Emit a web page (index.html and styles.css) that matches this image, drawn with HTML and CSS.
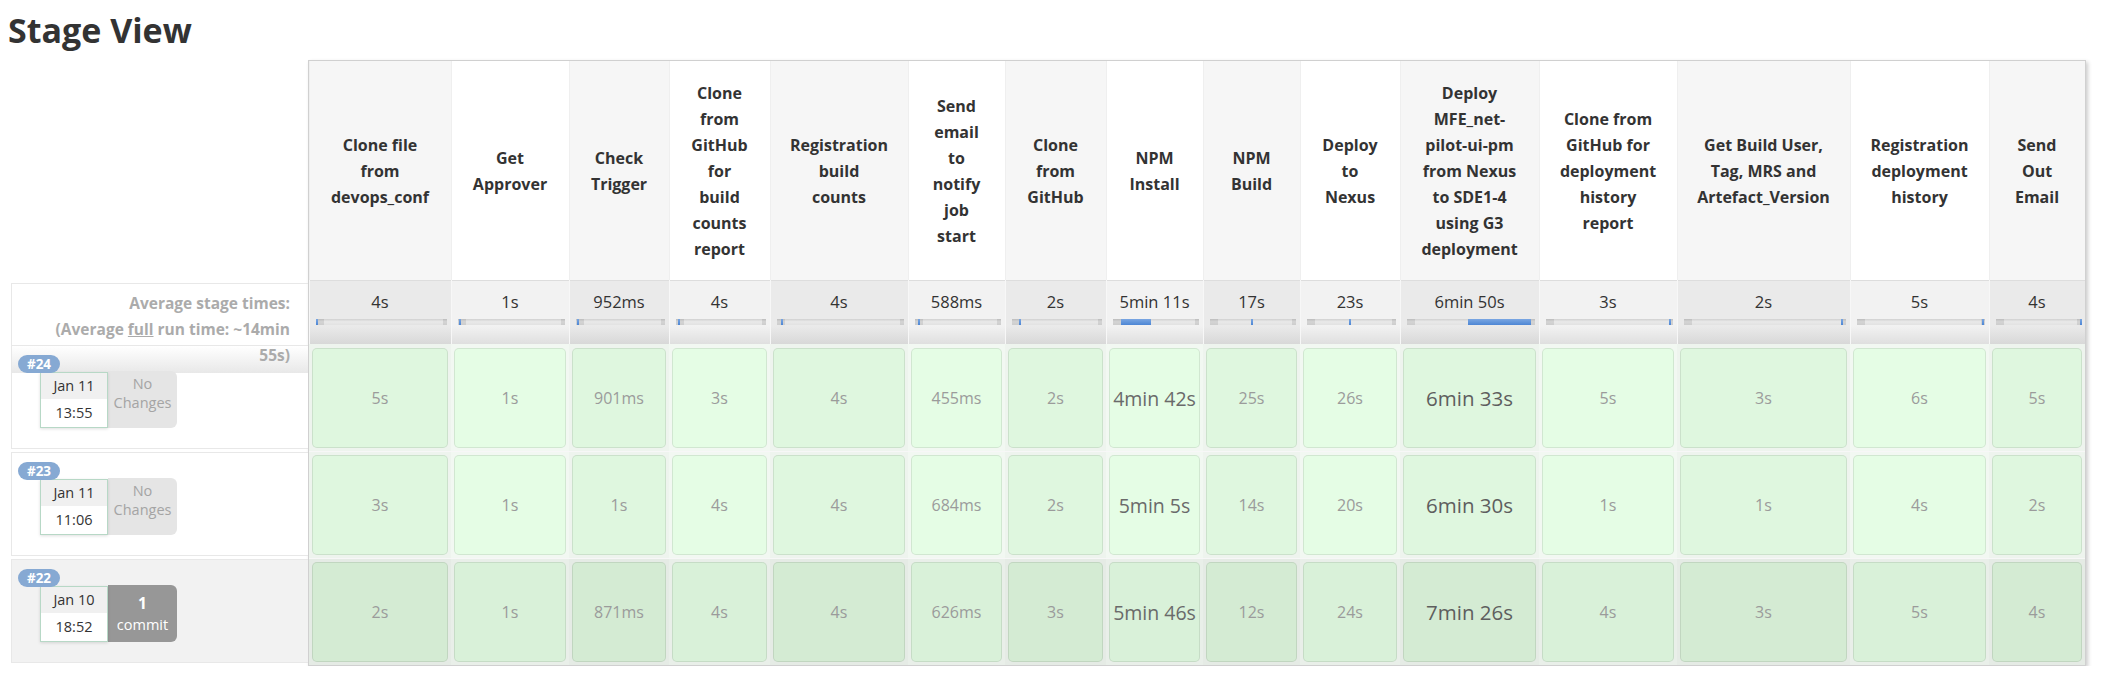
FILE: index.html
```html
<!DOCTYPE html>
<html>
<head>
<meta charset="utf-8">
<title>Stage View</title>
<link rel="stylesheet" href="styles.css">
</head>
<body>
<h1 class="title">Stage View</h1>
<div class="stage-view">
  <div class="runs">
    <div class="runs-head"></div>
    <div class="avg-label">Average stage times:<br>(Average <span class="full">full</span> run time: ~14min<br>55s)</div>
    <div class="run first">
      <span class="badge">#24</span>
      <div class="run-info">
        <div class="date"><div class="date-day">Jan 11</div><div class="date-time">13:55</div></div>
        <div class="changes">No<br>Changes</div>
      </div>
    </div>
    <div class="run">
      <span class="badge">#23</span>
      <div class="run-info">
        <div class="date"><div class="date-day">Jan 11</div><div class="date-time">11:06</div></div>
        <div class="changes">No<br>Changes</div>
      </div>
    </div>
    <div class="run shaded">
      <span class="badge">#22</span>
      <div class="run-info">
        <div class="date"><div class="date-day">Jan 10</div><div class="date-time">18:52</div></div>
        <div class="changes commit"><b>1</b><span>commit</span></div>
      </div>
    </div>
  </div>

  <table class="stages">
    <colgroup>
      <col style="width:142px"><col style="width:118px"><col style="width:100px"><col style="width:101px"><col style="width:138px">
      <col style="width:97px"><col style="width:101px"><col style="width:97px"><col style="width:97px"><col style="width:100px">
      <col style="width:139px"><col style="width:138px"><col style="width:173px"><col style="width:139px"><col style="width:96px">
    </colgroup>
    <thead>
      <tr class="names">
        <th><div class="name">Clone file<br>from<br>devops_conf</div></th>
        <th><div class="name">Get<br>Approver</div></th>
        <th><div class="name">Check<br>Trigger</div></th>
        <th><div class="name">Clone<br>from<br>GitHub<br>for<br>build<br>counts<br>report</div></th>
        <th><div class="name">Registration<br>build<br>counts</div></th>
        <th><div class="name">Send<br>email<br>to<br>notify<br>job<br>start</div></th>
        <th><div class="name">Clone<br>from<br>GitHub</div></th>
        <th><div class="name">NPM<br>Install</div></th>
        <th><div class="name">NPM<br>Build</div></th>
        <th><div class="name">Deploy<br>to<br>Nexus</div></th>
        <th><div class="name">Deploy<br>MFE_net-<br>pilot-ui-pm<br>from Nexus<br>to SDE1-4<br>using G3<br>deployment</div></th>
        <th><div class="name">Clone from<br>GitHub for<br>deployment<br>history<br>report</div></th>
        <th><div class="name">Get Build User,<br>Tag, MRS and<br>Artefact_Version</div></th>
        <th><div class="name">Registration<br>deployment<br>history</div></th>
        <th><div class="name">Send<br>Out<br>Email</div></th>
      </tr>
      <tr class="averages">
        <td><div class="avg"><div class="avg-time">4s</div><div class="bar"><span class="fill tick" style="left:0%"></span></div></div></td>
        <td><div class="avg"><div class="avg-time">1s</div><div class="bar"><span class="fill tick" style="left:1%"></span></div></div></td>
        <td><div class="avg"><div class="avg-time">952ms</div><div class="bar"><span class="fill tick" style="left:1%"></span></div></div></td>
        <td><div class="avg"><div class="avg-time">4s</div><div class="bar"><span class="fill tick" style="left:2%"></span></div></div></td>
        <td><div class="avg"><div class="avg-time">4s</div><div class="bar"><span class="fill tick" style="left:3%"></span></div></div></td>
        <td><div class="avg"><div class="avg-time">588ms</div><div class="bar"><span class="fill tick" style="left:4%"></span></div></div></td>
        <td><div class="avg"><div class="avg-time">2s</div><div class="bar"><span class="fill tick" style="left:8%"></span></div></div></td>
        <td><div class="avg"><div class="avg-time">5min 11s</div><div class="bar"><span class="fill" style="left:9%;width:35%"></span></div></div></td>
        <td><div class="avg"><div class="avg-time">17s</div><div class="bar"><span class="fill tick" style="left:48%"></span></div></div></td>
        <td><div class="avg"><div class="avg-time">23s</div><div class="bar"><span class="fill tick" style="left:47%"></span></div></div></td>
        <td><div class="avg"><div class="avg-time">6min 50s</div><div class="bar"><span class="fill" style="left:48%;width:48.5%"></span></div></div></td>
        <td><div class="avg"><div class="avg-time">3s</div><div class="bar"><span class="fill tick" style="left:97%"></span></div></div></td>
        <td><div class="avg"><div class="avg-time">2s</div><div class="bar"><span class="fill tick" style="left:97%"></span></div></div></td>
        <td><div class="avg"><div class="avg-time">5s</div><div class="bar"><span class="fill tick" style="left:98%"></span></div></div></td>
        <td><div class="avg"><div class="avg-time">4s</div><div class="bar"><span class="fill tick" style="left:99%"></span></div></div></td>
      </tr>
    </thead>
    <tbody>
      <tr>
        <td><div class="cell">5s</div></td>
        <td><div class="cell">1s</div></td>
        <td><div class="cell">901ms</div></td>
        <td><div class="cell">3s</div></td>
        <td><div class="cell">4s</div></td>
        <td><div class="cell">455ms</div></td>
        <td><div class="cell">2s</div></td>
        <td><div class="cell long">4min 42s</div></td>
        <td><div class="cell">25s</div></td>
        <td><div class="cell">26s</div></td>
        <td><div class="cell longest">6min 33s</div></td>
        <td><div class="cell">5s</div></td>
        <td><div class="cell">3s</div></td>
        <td><div class="cell">6s</div></td>
        <td><div class="cell">5s</div></td>
      </tr>
      <tr>
        <td><div class="cell">3s</div></td>
        <td><div class="cell">1s</div></td>
        <td><div class="cell">1s</div></td>
        <td><div class="cell">4s</div></td>
        <td><div class="cell">4s</div></td>
        <td><div class="cell">684ms</div></td>
        <td><div class="cell">2s</div></td>
        <td><div class="cell long">5min 5s</div></td>
        <td><div class="cell">14s</div></td>
        <td><div class="cell">20s</div></td>
        <td><div class="cell longest">6min 30s</div></td>
        <td><div class="cell">1s</div></td>
        <td><div class="cell">1s</div></td>
        <td><div class="cell">4s</div></td>
        <td><div class="cell">2s</div></td>
      </tr>
      <tr class="shaded">
        <td><div class="cell">2s</div></td>
        <td><div class="cell">1s</div></td>
        <td><div class="cell">871ms</div></td>
        <td><div class="cell">4s</div></td>
        <td><div class="cell">4s</div></td>
        <td><div class="cell">626ms</div></td>
        <td><div class="cell">3s</div></td>
        <td><div class="cell long">5min 46s</div></td>
        <td><div class="cell">12s</div></td>
        <td><div class="cell">24s</div></td>
        <td><div class="cell longest">7min 26s</div></td>
        <td><div class="cell">4s</div></td>
        <td><div class="cell">3s</div></td>
        <td><div class="cell">5s</div></td>
        <td><div class="cell">4s</div></td>
      </tr>
    </tbody>
  </table>
</div>
</body>
</html>
```

FILE: styles.css
```css
body {
  margin: 8px;
  font-family: "Open Sans", "Noto Sans", sans-serif;
  color: #333;
  background: #fff;
}

.title {
  margin: 0 0 8px;
  font-size: 34px;
  font-weight: 700;
  line-height: 44px;
  color: #333;
}

.stage-view {
  display: flex;
  align-items: flex-start;
}

/* ---------- left column (runs) ---------- */
.runs {
  flex: none;
  width: 297px;
  margin-left: 3px;
}

.runs-head {
  height: 223px;
}

.avg-label {
  position: relative;
  z-index: 2;
  box-sizing: border-box;
  height: 62px;
  padding: 6px 18px 0 0;
  border-top: 1px solid #e8e8e8;
  border-left: 1px solid #e8e8e8;
  text-align: right;
  white-space: nowrap;
  font-size: 15.5px;
  font-weight: 700;
  line-height: 26px;
  color: #ababab;
}

.avg-label .full {
  text-decoration: underline;
}

.run {
  position: relative;
  box-sizing: border-box;
  height: 104px;
  margin-bottom: 3px;
  border: 1px solid #e8e8e8;
  border-right: none;
  background: #fff;
}

.run.first {
  background: linear-gradient(#ffffff, #e8e8e8) 0 0 / 100% 27px no-repeat, #fff;
}

.run.shaded {
  background: #f2f2f2;
}

.badge {
  position: absolute;
  z-index: 3;
  left: 6px;
  top: 9px;
  width: 42px;
  height: 18px;
  border-radius: 9px;
  background: #86a9d3;
  color: #fff;
  font-size: 13.5px;
  font-weight: 700;
  line-height: 18px;
  text-align: center;
}

.run-info {
  display: flex;
  margin: 26px 0 0 28px;
}

.date {
  position: relative;
  z-index: 1;
  box-sizing: border-box;
  width: 68px;
  border: 1px solid #b7d8c6;
  background: #fff;
  box-shadow: 0 1px 3px rgba(0, 0, 0, 0.13);
  text-align: center;
  font-size: 14.5px;
  color: #333;
}

.date-day {
  height: 26px;
  line-height: 26px;
  background: #f0f0f0;
}

.date-time {
  height: 28px;
  line-height: 28px;
}

.changes {
  box-sizing: border-box;
  width: 69px;
  height: 57px;
  margin-top: -1px;
  padding-top: 3px;
  border-radius: 0 6px 6px 0;
  background: #e5e5e5;
  color: #a4a4a4;
  font-size: 14.5px;
  line-height: 19px;
  text-align: center;
}

.changes.commit {
  display: flex;
  flex-direction: column;
  align-items: center;
  justify-content: center;
  padding-top: 0;
  background: #979797;
  color: #fff;
  line-height: 21px;
}

.changes.commit b {
  font-size: 15.5px;
}

/* ---------- stage table ---------- */
.stages {
  flex: none;
  width: 1778px;
  table-layout: fixed;
  border-collapse: separate;
  border-spacing: 0;
  border: 1px solid #d0d0d0;
  box-shadow: 2px 2px 4px rgba(0, 0, 0, 0.2);
}

.stages th,
.stages td {
  padding: 0;
}

.names th {
  background: #f6f6f6;
  box-shadow: inset 1px 0 0 #efefef;
}

.names th:nth-child(even) {
  background: #fff;
}

.name {
  display: flex;
  align-items: center;
  justify-content: center;
  height: 219px;
  text-align: center;
  white-space: nowrap;
  font-size: 16px;
  font-weight: 700;
  line-height: 26px;
  color: #333;
}

.averages td {
  background: linear-gradient(to bottom, #dddddd 0, #dddddd 1px, #eaeaea 1px, #eaeaea 72%, #d8d8d8 100%);
  box-shadow: inset 1px 0 0 #f7f7f7;
}

.averages td:nth-child(even) {
  background: linear-gradient(to bottom, #dddddd 0, #dddddd 1px, #f2f2f2 1px, #f2f2f2 72%, #dfdfdf 100%);
}

.avg {
  box-sizing: border-box;
  height: 64px;
  padding-top: 11px;
  text-align: center;
}

.avg-time {
  font-size: 16.5px;
  line-height: 22px;
  color: #333;
}

.bar {
  position: relative;
  height: 6px;
  margin: 6px 4px 0 7px;
  background: linear-gradient(to bottom, #d0d0d0 0, #e9e9e9 45%, #e2e2e2 100%);
}

.bar::before,
.bar::after {
  content: "";
  position: absolute;
  top: 0;
  bottom: 0;
  background: rgba(0, 0, 0, 0.09);
}

.bar::before {
  left: 0;
  width: 8px;
}

.bar::after {
  right: 0;
  width: 4px;
}

.fill {
  position: absolute;
  z-index: 1;
  top: 0;
  bottom: 0;
  background: linear-gradient(to bottom, #7aa6e2, #4d86d4);
}

.fill.tick {
  width: 2px;
}

.stages tbody td {
  padding: 4px 3px 3px;
  background: #eef4ee;
}

.stages tbody td:nth-child(even) {
  background: #f2f8f2;
}

.stages tbody tr + tr td {
  box-shadow: inset 0 1px 0 #f7f7f7;
}

.stages tbody tr.shaded td {
  background: #e5ebe5;
}

.stages tbody tr.shaded td:nth-child(even) {
  background: #e9efe9;
}

.cell {
  display: flex;
  align-items: center;
  justify-content: center;
  box-sizing: border-box;
  height: 100px;
  border: 1px solid rgba(0, 0, 0, 0.085);
  border-radius: 5px;
  background: #dff7df;
  font-size: 16px;
  color: #9b9b9b;
  white-space: nowrap;
}

td:nth-child(even) > .cell {
  background: #e5fde5;
}

tr.shaded td > .cell {
  background: #d4ebd3;
}

tr.shaded td:nth-child(even) > .cell {
  background: #d9f1d9;
}

.cell.long {
  font-size: 19.5px;
  color: #6a6a6a;
}

.cell.longest {
  font-size: 20.5px;
  color: #5e5e5e;
}
```
